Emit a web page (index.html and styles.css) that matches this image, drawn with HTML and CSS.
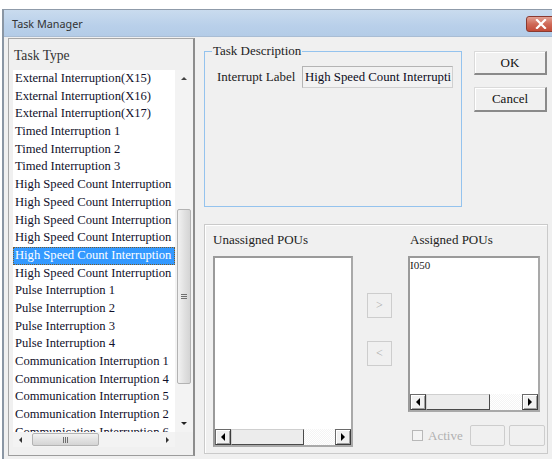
FILE: index.html
```html
<!DOCTYPE html>
<html>
<head>
<meta charset="utf-8">
<title>Task Manager</title>
<link rel="stylesheet" href="styles.css">
</head>
<body>
<div class="window">
  <div class="titlebar">
    <span class="title">Task Manager</span>
    <span class="close">
      <svg width="12" height="10" viewBox="0 0 12 10"><path d="M2 1 L10 9 M10 1 L2 9" stroke="#fff" stroke-width="2.2" stroke-linecap="square"/></svg>
    </span>
  </div>
  <div class="client">
    <div class="taskpanel">
      <div class="caption">Task Type</div>
      <div class="listbox">
        <div class="listmain">
          <ul class="items">
            <li>External Interruption(X15)</li>
            <li>External Interruption(X16)</li>
            <li>External Interruption(X17)</li>
            <li>Timed Interruption 1</li>
            <li>Timed Interruption 2</li>
            <li>Timed Interruption 3</li>
            <li>High Speed Count Interruption</li>
            <li>High Speed Count Interruption</li>
            <li>High Speed Count Interruption</li>
            <li>High Speed Count Interruption</li>
            <li class="selected">High Speed Count Interruption</li>
            <li>High Speed Count Interruption</li>
            <li>Pulse Interruption 1</li>
            <li>Pulse Interruption 2</li>
            <li>Pulse Interruption 3</li>
            <li>Pulse Interruption 4</li>
            <li>Communication Interruption 1</li>
            <li>Communication Interruption 4</li>
            <li>Communication Interruption 5</li>
            <li>Communication Interruption 2</li>
            <li>Communication Interruption 6</li>
          </ul>
          <div class="vscroll">
            <span class="varrow"><i class="tri tri-up"></i></span>
            <span class="vthumb"><i class="grip-h"></i></span>
            <span class="varrow"><i class="tri tri-down"></i></span>
          </div>
        </div>
        <div class="listfoot">
          <div class="hscroll">
            <span class="harrow"><i class="tri tri-left"></i></span>
            <span class="hthumb"><i class="grip-v"></i></span>
            <span class="harrow"><i class="tri tri-right"></i></span>
          </div>
          <div class="corner"></div>
        </div>
      </div>
    </div>

    <div class="main">
      <div class="top">
        <fieldset class="desc">
          <legend>Task Description</legend>
          <div class="field">
            <span class="field-label">Interrupt Label</span>
            <span class="textbox">High Speed Count Interrupti</span>
          </div>
        </fieldset>
        <div class="actions">
          <button class="btn btn-ok">OK</button>
          <button class="btn btn-cancel">Cancel</button>
        </div>
      </div>

      <div class="pous">
        <div class="pou-col col-unassigned">
          <div class="pou-label">Unassigned POUs</div>
          <div class="pou-list list-unassigned">
            <div class="pou-items"></div>
            <div class="cscroll">
              <span class="cbtn"><i class="tri tri-left"></i></span>
              <span class="cthumb thumb-unassigned"></span>
              <span class="ctrack"></span>
              <span class="cbtn"><i class="tri tri-right"></i></span>
            </div>
          </div>
        </div>

        <div class="movers">
          <span class="move move-add">&gt;</span>
          <span class="move move-remove">&lt;</span>
        </div>

        <div class="pou-col col-assigned">
          <div class="pou-label">Assigned POUs</div>
          <div class="pou-list list-assigned">
            <div class="pou-items"><div class="pou-item">I050</div></div>
            <div class="cscroll">
              <span class="cbtn"><i class="tri tri-left"></i></span>
              <span class="cthumb thumb-assigned"></span>
              <span class="ctrack"></span>
              <span class="cbtn"><i class="tri tri-right"></i></span>
            </div>
          </div>
          <div class="active-row">
            <span class="checkbox"></span>
            <span class="active-label">Active</span>
            <span class="blank-btn blank-1"></span>
            <span class="blank-btn blank-2"></span>
          </div>
        </div>
      </div>
    </div>
  </div>
</div>
</body>
</html>
```

FILE: styles.css
```css
* { box-sizing: border-box; }

html, body {
  margin: 0;
  padding: 0;
  background: #ffffff;
  overflow: hidden;
}

body {
  width: 552px;
  height: 459px;
  font-family: "Liberation Serif", "Times New Roman", serif;
  font-size: 13px;
  color: #111;
}

/* dialog frame */
.window {
  margin: 9px 0 0 2px;
  width: 550px;
  height: 450px;
  border-left: 2px solid #8a96a4;
  border-top: 1px solid #8f9baa;
  background: #f0f0f0;
  overflow: hidden;
}

.titlebar {
  height: 27px;
  display: flex;
  align-items: center;
  justify-content: space-between;
  padding-left: 8px;
  background: linear-gradient(#c9dbee, #b9d0ea 60%, #b4cce7);
  border-bottom: 1px solid #a9bdd4;
}

.title {
  font-family: "Noto Sans", "Open Sans", sans-serif;
  font-size: 10.8px;
  color: #333;
}

.close {
  width: 31px;
  height: 16px;
  margin-right: -5px;
  margin-top: 1px;
  display: flex;
  align-items: center;
  justify-content: center;
  border: 1px solid #8a3a30;
  border-radius: 3px 0 0 3px;
  background: linear-gradient(#e3a294, #cf6a58 50%, #c24b38);
}

.close svg { margin-right: 2px; }

.client {
  display: flex;
  padding: 1px 0 0 4px;
  height: 422px;
}

/* left: task type list */
.taskpanel {
  width: 187px;
  height: 418px;
  border: 1px solid #a7a7a7;
  border-right: 2px solid #8d8d8d;
  border-bottom: 1px solid #9c9c9c;
  padding-left: 4px;
  display: flex;
  flex-direction: column;
}

.caption {
  height: 31px;
  padding: 10px 0 0 1px;
  line-height: 14px;
  font-size: 13.6px;
  color: #333;
}

.listbox {
  height: 379px;
  display: flex;
  flex-direction: column;
}

.listmain {
  height: 362px;
  display: flex;
  overflow: hidden;
}

.items {
  list-style: none;
  margin: 0;
  padding: 0;
  width: 162px;
  background: #fff;
  overflow: hidden;
}

.items li {
  height: 17.7px;
  line-height: 17.7px;
  padding-left: 2px;
  white-space: nowrap;
  overflow: hidden;
  font-size: 12.6px;
  color: #10102a;
}

.items li.selected {
  background: #3399ff;
  color: #fff;
  outline: 1px dotted #7a5a2a;
  outline-offset: -1px;
}

.vscroll {
  width: 18px;
  background: #f3f3f3;
  display: flex;
  flex-direction: column;
  align-items: center;
}

.varrow {
  height: 17px;
  width: 17px;
  display: flex;
  align-items: center;
  justify-content: center;
  flex: none;
}

.vthumb {
  margin-top: 122px;
  width: 14px;
  height: 175px;
  border: 1px solid #b3b3b3;
  border-radius: 2px;
  background: linear-gradient(90deg, #f2f2f2, #e2e2e2 50%, #d4d4d4);
  display: flex;
  align-items: center;
  justify-content: center;
  margin-bottom: auto;
}

.grip-h {
  width: 6px;
  height: 5px;
  background: repeating-linear-gradient(#6f6f6f 0 1px, transparent 1px 2px);
}

.listfoot {
  height: 15px;
  display: flex;
}

.hscroll {
  width: 162px;
  background: #f3f3f3;
  display: flex;
  align-items: center;
}

.harrow {
  width: 15px;
  height: 15px;
  display: flex;
  align-items: center;
  justify-content: center;
  flex: none;
}

.harrow:last-child { margin-left: auto; }

.hthumb {
  margin-left: 4px;
  width: 67px;
  height: 13px;
  border: 1px solid #b3b3b3;
  border-radius: 2px;
  background: linear-gradient(#f2f2f2, #e2e2e2 50%, #d4d4d4);
  display: flex;
  align-items: center;
  justify-content: center;
}

.grip-v {
  width: 5px;
  height: 6px;
  background: repeating-linear-gradient(90deg, #6f6f6f 0 1px, transparent 1px 2px);
}

.corner {
  width: 18px;
  background: #f0f0f0;
}

/* small scrollbar triangles */
.tri {
  display: block;
  width: 0;
  height: 0;
  border-style: solid;
}
.tri-up { border-width: 0 3px 3px 3px; border-color: transparent transparent #444 transparent; }
.tri-down { border-width: 3px 3px 0 3px; border-color: #222 transparent transparent transparent; }
.tri-left { border-width: 3px 3px 3px 0; border-color: transparent #333 transparent transparent; }
.tri-right { border-width: 3px 0 3px 3px; border-color: transparent transparent transparent #333; }

/* right side */
.main {
  margin-left: 9px;
  width: 344px;
  display: flex;
  flex-direction: column;
}

.top {
  display: flex;
  margin-top: 6px;
}

.desc {
  margin: 0;
  width: 258px;
  height: 163px;
  border: 1px solid #94c3ee;
  padding: 0 0 0 12px;
}

.desc legend {
  padding: 0 1px;
  margin-left: -5px;
  line-height: 14px;
  color: #222;
}

.field {
  display: flex;
  align-items: center;
  margin-top: 8px;
}

.field-label {
  width: 85px;
  color: #222;
}

.textbox {
  width: 151px;
  height: 22px;
  line-height: 20px;
  border: 1px solid #b4b4b4;
  border-bottom-color: #d0d0d0;
  border-right-color: #d0d0d0;
  background: #f2f2f2;
  font-size: 12.8px;
  padding-left: 2px;
  white-space: nowrap;
  overflow: hidden;
  color: #0c0c1c;
}

.actions {
  margin: 7px 0 0 12px;
  display: flex;
  flex-direction: column;
  gap: 12px;
}

.btn {
  font-family: "Liberation Serif", "Times New Roman", serif;
  font-size: 13px;
  color: #111;
  width: 73px;
  height: 24px;
  padding: 0;
  background: #f0f0f0;
  border: 1px solid #dadada;
  border-right: 2px solid #8a8a8a;
  border-bottom: 2px solid #8a8a8a;
  box-shadow: inset 1px 1px 0 #fff;
}

.btn-cancel { height: 25px; }

.pous {
  margin-top: 17px;
  height: 230px;
  border: 1px solid #cacaca;
  box-shadow: inset 1px 1px 0 #fff;
  display: flex;
  padding: 8px 0 0 8px;
}

.pou-col {
  display: flex;
  flex-direction: column;
}

.col-unassigned { width: 140px; }
.col-assigned { width: 137px; }

.pou-label {
  line-height: 14px;
  height: 14px;
  margin-bottom: 9px;
  color: #222;
}

.col-assigned .pou-label { margin-left: 2px; }

.pou-list {
  border: 2px solid #a9a9a9;
  border-top-color: #9a9a9a;
  border-left-color: #9a9a9a;
  background: #fff;
  display: flex;
  flex-direction: column;
}

.list-unassigned { width: 140px; height: 191px; }
.list-assigned { width: 132px; height: 156px; }

.pou-items {
  flex: 1;
}

.pou-item {
  font-size: 11px;
  line-height: 14px;
  color: #222;
}

/* classic horizontal scrollbar */
.cscroll {
  height: 16px;
  display: flex;
  background: repeating-conic-gradient(#f4f4f4 0 25%, #ffffff 0 50%) 0 0 / 2px 2px;
}

.cbtn {
  width: 16px;
  height: 16px;
  flex: none;
  border: 1px solid #3c3c3c;
  border-top-color: #6a6a6a;
  border-left-color: #6a6a6a;
  background: #f0f0f0;
  box-shadow: inset 1px 1px 0 #fff, inset -1px -1px 0 #a0a0a0;
  display: flex;
  align-items: center;
  justify-content: center;
}

.cbtn .tri-left { border-width: 4px 4px 4px 0; border-color: transparent #000 transparent transparent; }
.cbtn .tri-right { border-width: 4px 0 4px 4px; border-color: transparent transparent transparent #000; }

.cthumb {
  height: 16px;
  flex: none;
  border: 1px solid #4a4a4a;
  border-top-color: #cfcfcf;
  border-left-color: #cfcfcf;
  background: #ececec;
}

.thumb-unassigned { width: 73px; }
.thumb-assigned { width: 64px; }

.ctrack { flex: 1; }

.movers {
  width: 25px;
  margin: 0 16px 0 14px;
  display: flex;
  flex-direction: column;
  gap: 23px;
  padding-top: 60px;
}

.move {
  width: 25px;
  height: 25px;
  border: 1px solid #cdcdcd;
  display: flex;
  align-items: center;
  justify-content: center;
  color: #a8a8a8;
  font-size: 12px;
}

.active-row {
  display: flex;
  align-items: center;
  margin-top: 13px;
  height: 21px;
}

.checkbox {
  width: 11px;
  height: 11px;
  margin-left: 4px;
  border: 1px solid #b8b8b8;
  background: #f4f4f4;
}

.active-label {
  margin-left: 5px;
  color: #b0b0b0;
  width: 42px;
}

.blank-btn {
  height: 21px;
  border: 1px solid #cdcdcd;
  border-radius: 2px;
}

.blank-1 { width: 35px; }
.blank-2 { width: 36px; margin-left: 4px; }
```
